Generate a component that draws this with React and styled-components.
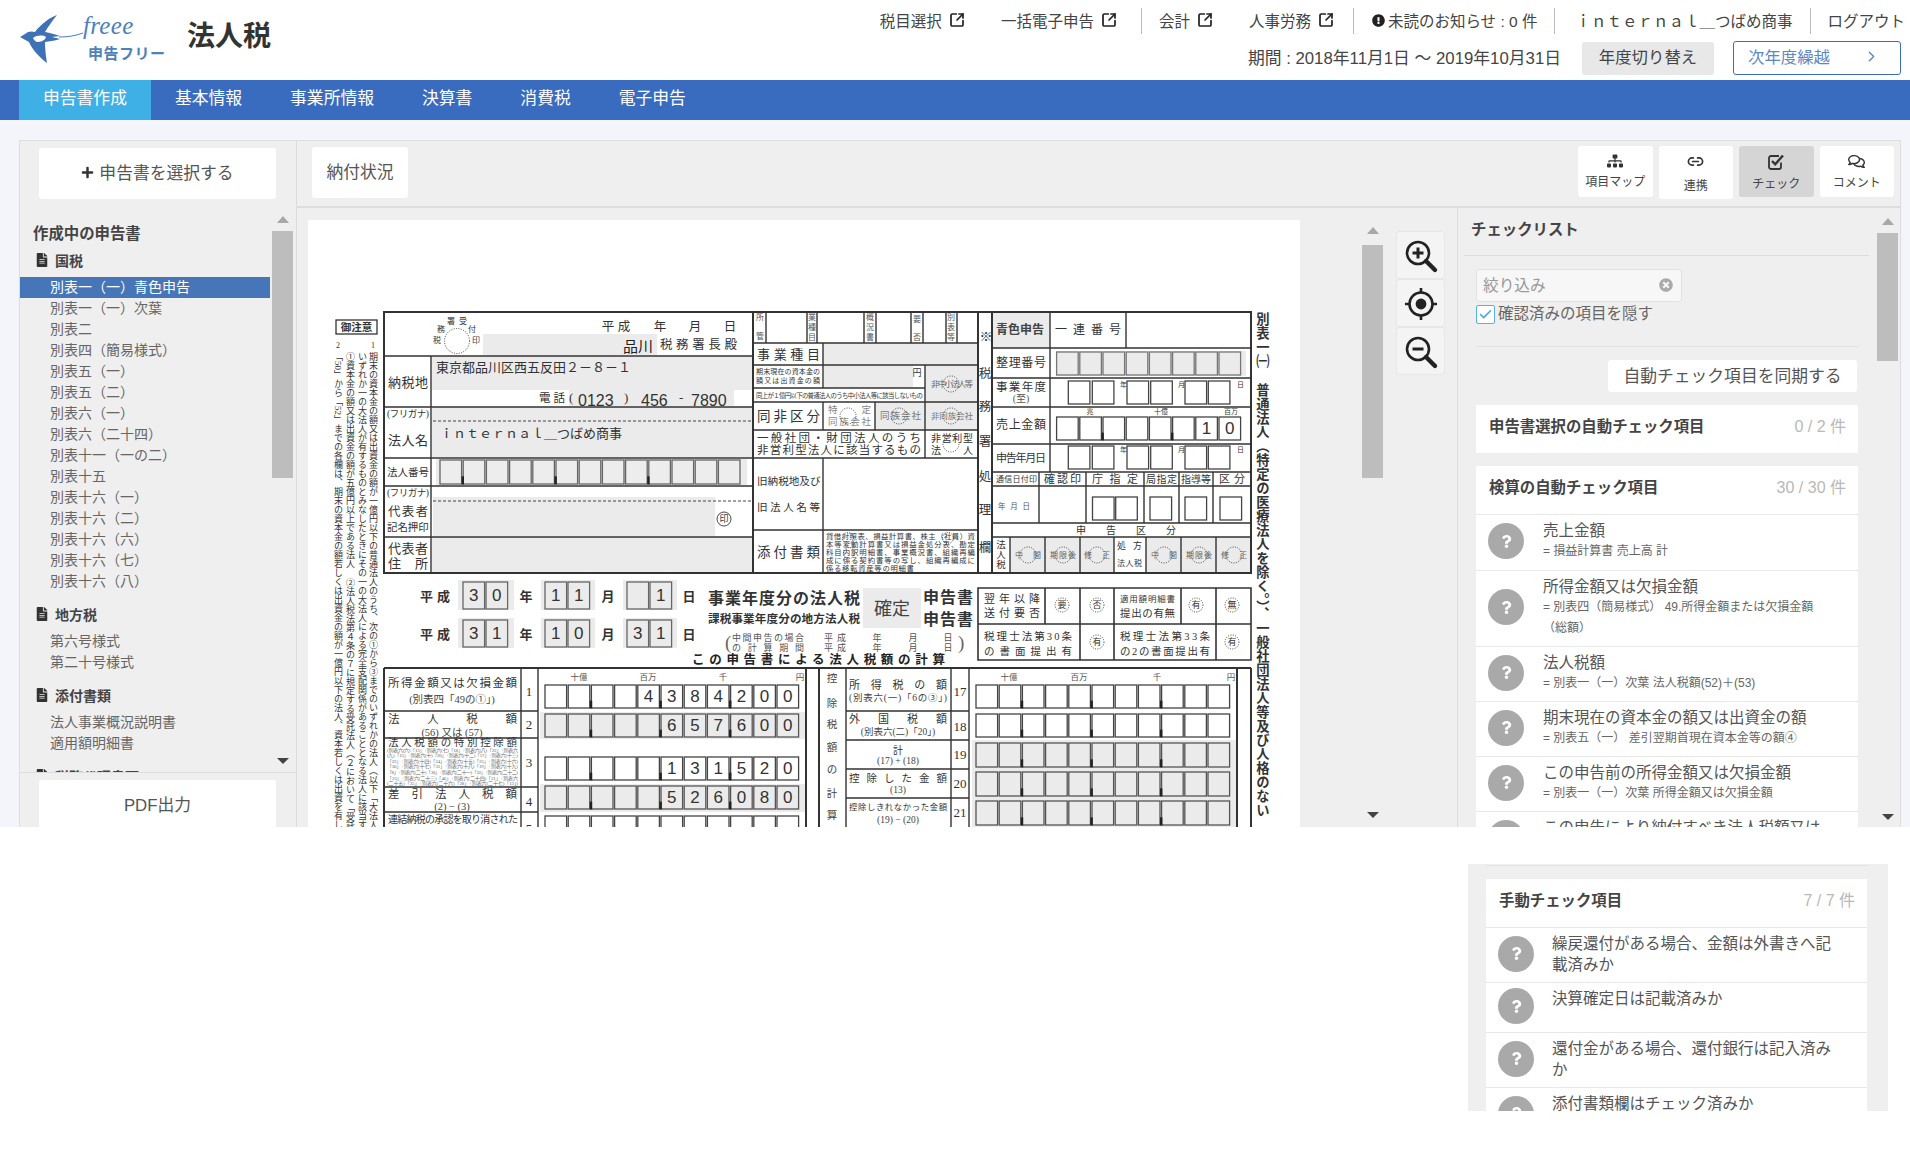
import React from "react";
import styled, { createGlobalStyle } from "styled-components";
import { SquareArrowOutUpRight, Link2, ChevronRight, Check } from "lucide-react";
import { FaExclamationCircle, FaPlus, FaFileAlt, FaSitemap, FaRegComments, FaTimesCircle, FaQuestion } from "react-icons/fa";

const SANS = `"Liberation Sans","Noto Sans CJK JP",sans-serif`;
const Global = createGlobalStyle`
  html, body { margin: 0; padding: 0; background: #fff; }
  body { font-family: ${SANS}; color: #333; }
  * { box-sizing: border-box; }
`;

const Page = styled.div`width: 1910px; height: 1172px; overflow: hidden; background: #fff;`;
const AppFrame = styled.div`height: 827px; overflow: hidden; background: #f3f5fa;`;

const Header = styled.header`height: 80px; background: #fff; display: flex; justify-content: space-between; padding: 0 5px 0 19px;`;
const Brand = styled.div`display: flex; align-items: flex-start;`;
const LogoSvg = styled.svg`margin-top: 14px; flex: none;`;
const ProductTitle = styled.h1`margin: 19px 0 0 18px; font-size: 28px; line-height: 36px; font-weight: 700; color: #333;`;
const HeaderRight = styled.div`display: flex; flex-direction: column; align-items: flex-end;`;
const TopLinks = styled.div`display: flex; height: 26px; margin-top: 8px;`;
const LinkGroup = styled.div`
  display: flex; align-items: center; gap: ${(p) => p.$gap || 36}px;
  padding: 0 ${(p) => p.$pr ?? 18}px 2px ${(p) => p.$pl ?? 17}px;
  border-left: ${(p) => (p.$first ? "none" : "1px solid #bbb")};
  font-size: 15.5px; color: #444; white-space: nowrap;
`;
const ExtLink = styled.span`display: inline-flex; align-items: center; gap: 7px; svg { color: #222; }`;
const NoticeText = styled.span`display: inline-flex; align-items: center; gap: 3px; svg { color: #222; }`;
const PeriodRow = styled.div`display: flex; align-items: center; margin: 7px 0 0; height: 34px; padding-right: 4px;`;
const PeriodText = styled.span`font-size: 16.8px; color: #444; margin: 0 21px 2px 0; white-space: nowrap;`;
const SwitchButton = styled.button`
  width: 132px; height: 33px; border: 0; border-radius: 3px; background: #e8e8e8; color: #444;
  font: 16.4px ${SANS}; padding: 0 0 4px; margin-right: 19px;
`;
const NextButton = styled.button`
  width: 168px; height: 34px; border: 1px solid #396cbf; border-radius: 3px; background: #fff; color: #5b87c9;
  font: 16.4px ${SANS}; display: flex; align-items: center; justify-content: space-between; padding: 0 20px 4px 14px;
`;

const NavBar = styled.nav`height: 40px; background: #396cbf; display: flex; padding-left: 19px;`;
const NavTab = styled.div`
  padding: 0 24px; line-height: 38px; font-size: 16.8px; color: #fff; white-space: nowrap;
  background: ${(p) => (p.$active ? "#3fb0e6" : "transparent")};
`;

const Workspace = styled.main`
  margin: 20px 9px 0 19px; height: 720px; background: #efefef; border: 1px solid #ddd; border-bottom: 0;
  display: flex;
`;
const Sidebar = styled.aside`width: 277px; flex: none; border-right: 1px solid #ddd; display: flex; flex-direction: column;`;
const SideTop = styled.div`height: 67px; flex: none; padding: 7px 20px 0 19px;`;
const WhiteButton = styled.div`
  background: #fff; border-radius: 3px; display: flex; align-items: center; justify-content: center; gap: 5px;
  font-size: 16.8px; color: #555; height: ${(p) => p.$h || 51}px; width: ${(p) => p.$w || "auto"};
  white-space: nowrap; flex: none; padding-bottom: 3px;
`;
const SideBody = styled.div`height: 565px; flex: none; display: flex; overflow: hidden; border-bottom: 1px solid #ddd;`;
const Tree = styled.div`width: 250px; flex: none; padding-top: 15px;`;
const TreeTitle = styled.div`padding-left: 13px; font-size: 15.4px; line-height: 22px; font-weight: 700; color: #444;`;
const TreeSection = styled.div`
  display: flex; align-items: center; gap: 6px; padding-left: 15px; height: 20px; font-size: 14px; font-weight: 700; color: #444;
  margin: ${(p) => p.$mt ?? 12}px 0 7px; svg { color: #333; }
`;
const TreeRow = styled.div`
  height: 21px; line-height: 21px; padding-left: 30px; font-size: 14px; white-space: nowrap;
  color: ${(p) => (p.$active ? "#fff" : "#666")}; background: ${(p) => (p.$active ? "#4676b8" : "transparent")};
`;
const SideFoot = styled.div`flex: 1; padding: 7px 20px 0 19px;`;

const Rail = styled.div`
  width: 21px; flex: none; display: flex; flex-direction: column; align-items: center;
  margin-left: ${(p) => p.$ml || 0}px; height: ${(p) => p.$h}px; padding-top: ${(p) => p.$pt}px;
`;
const ArrowUp = styled.i`width: 0; height: 0; border: 6px solid transparent; border-top: 0; border-bottom: 7px solid #a8a8a8; display: block; flex: none;`;
const ArrowDown = styled.i`width: 0; height: 0; border: 6px solid transparent; border-bottom: 0; border-top: 6px solid #444; display: block; margin-top: auto; flex: none;`;
const Thumb = styled.div`width: 21px; flex: none; background: #bdbdbd; height: ${(p) => p.$h}px; margin-top: ${(p) => p.$mt}px;`;

const Center = styled.div`flex: 1; min-width: 0; display: flex; flex-direction: column;`;
const Toolbar = styled.div`height: 67px; flex: none; border-bottom: 2px solid #ddd; display: flex; align-items: flex-start; padding: 6px 6px 0 15px;`;
const ToolGroup = styled.div`margin-left: auto; display: flex; gap: 6px; margin-top: -1px;`;
const ToolButton = styled.div`
  width: 74.5px; height: ${(p) => (p.$tall ? 53 : 51)}px; border-radius: 3px; background: ${(p) => (p.$on ? "#d5d5d5" : "#fff")};
  display: flex; flex-direction: column; align-items: center; padding-top: 7px; font-size: 12px; color: #444;
  svg { color: #333; flex: none; }
`;
const ToolLabel = styled.span`margin-top: ${(p) => (p.$tall ? 8 : 5)}px; line-height: 16px; white-space: nowrap;`;
const WorkRow = styled.div`flex: 1; min-height: 0; display: flex;`;
const FormArea = styled.section`width: 1160px; flex: none; display: flex; padding: 12px 0 0 11px;`;
const Paper = styled.div`width: 992px; height: 620px; flex: none; background: #fff; overflow: hidden;`;
const ZoomTools = styled.div`width: 49px; flex: none; margin: 11px 0 0 13px; display: flex; flex-direction: column;`;
const ZoomButton = styled.div`
  height: 48px; background: #f4f4f4; border: 1px solid #e7e7e7; border-radius: 3px;
  display: flex; align-items: center; justify-content: center; padding-top: 1px;
`;
const CheckPanel = styled.section`flex: 1; min-width: 0; border-left: 1px solid #ddd; display: flex;`;
const CheckMain = styled.div`width: 419px; flex: none;`;
const CheckHead = styled.div`
  height: 48px; margin: 0 8px 0 6px; padding: 11px 0 0 7px; border-bottom: 1px solid #ddd;
  font-size: 15.4px; line-height: 22px; font-weight: 700; color: #444;
`;
const Filter = styled.div`padding: 13px 19px 0 18px;`;
const SearchBox = styled.div`
  width: 206px; height: 33px; border: 1px solid #e2e2e2; border-radius: 3px; background: #f7f7f7; color: #999;
  display: flex; align-items: center; justify-content: space-between; padding: 0 8px 2px 6px; font-size: 15.7px;
  svg { color: #aaa; }
`;
const HideRow = styled.div`display: flex; align-items: center; gap: 3px; margin-top: 2px; font-size: 15.5px; color: #666; line-height: 20px;`;
const CheckBox = styled.span`
  width: 19px; height: 19px; background: #fff; border: 1px solid #56b1ea; border-radius: 2px;
  display: flex; align-items: center; justify-content: center; color: #47a8e6;
`;
const Rule = styled.div`height: 1px; background: #e2e2e2; margin-top: 22px;`;
const SyncRow = styled.div`display: flex; justify-content: flex-end; margin: 13px 1px 0 0;`;
const Card = styled.div`background: #fff; margin-top: 13px;`;
const CardHead = styled.div`
  height: ${(p) => p.$h || 48}px; display: flex; justify-content: space-between; padding: 11px 12px 0 13px; line-height: 22px;
`;
const CardTitle = styled.span`font-size: 15.4px; font-weight: 700; color: #444;`;
const CardCount = styled.span`font-size: 16px; color: #b8b8b8;`;
const CheckRow = styled.div`
  display: flex; align-items: center; border-top: 1px solid #e8e8e8; padding-left: 12px;
  min-height: ${(p) => p.$h || 0}px;
`;
const QuestionDot = styled.span`
  width: 36px; height: 36px; border-radius: 50%; background: #a9a9a9; color: #fff; flex: none; margin-bottom: 3px;
  display: flex; align-items: center; justify-content: center;
`;
const RowText = styled.div`
  align-self: flex-start; margin: 5px 0 0 ${(p) => p.$ml || 19}px; width: ${(p) => p.$w || 290}px;
`;
const RowTitle = styled.div`font-size: 15.5px; line-height: 21px; color: #555;`;
const RowSub = styled.div`font-size: 12px; line-height: 21px; color: #666;`;

const BottomStrip = styled.div`
  width: 420px; height: 247px; margin: 37px 0 0 1468px; background: #efefef; overflow: hidden; padding: 1px 21px 0 18px;
`;
const StripRule = styled.div`height: 1px; background: #e4e4e4;`;

/* ---------- form picture helpers ---------- */
const Sheet = styled.svg`
  display: block; font-family: "Liberation Serif","Noto Sans CJK JP",serif; fill: #333;
`;
const Tx = ({ x, y, s = 12, len, mid, w, c, fam, children }) => (
  <text
    x={x} y={y} fontSize={s} dominantBaseline="central" textLength={len} lengthAdjust={len ? "spacing" : undefined}
    textAnchor={mid ? "middle" : "start"} fontWeight={w} fill={c} fontFamily={fam}
  >{children}</text>
);
const Vt = ({ x, y, s = 9, ls, w, children }) => (
  <text x={x} y={y} fontSize={s} writingMode="vertical-rl" letterSpacing={ls} fontWeight={w}>{children}</text>
);
const Box = ({ x, y, w, h, f = "#ebebeb" }) => <rect x={x} y={y} width={w} height={h} fill={f} />;
const Lines = ({ d, sw = 1.4 }) => <path d={d} fill="none" stroke="#333" strokeWidth={sw} />;
const Seal = ({ x, y, r = 8, t, c = "#666", s = 8.5, len }) => (
  <g>
    <circle cx={x} cy={y} r={r} fill="none" stroke="#333" strokeWidth="0.9" strokeDasharray="1 1.4" />
    {t && <Tx x={x} y={y} s={s} mid c={c} len={len}>{t}</Tx>}
  </g>
);
const Strip = ({ x, y, n, pitch = 23.2, w = 21.6, h = 23, digits = "", fill = "#fff", ticks = [], stroke = "#444", size = 17 }) => {
  const start = n - digits.length;
  return (
    <g>
      {Array.from({ length: n }).map((_, i) => (
        <rect key={i} x={x + i * pitch} y={y} width={w} height={h} fill={fill} stroke={stroke} strokeWidth="1.3" />
      ))}
      {digits.split("").map((d, i) => (
        <Tx key={i} x={x + (start + i) * pitch + w / 2} y={y + h / 2} s={size} mid fam='"Liberation Sans"' c="#333">{d}</Tx>
      ))}
      {ticks.map((t) => <rect key={t} x={x + t * pitch - 1.6} y={y + h * 0.68} width="2.4" height={h * 0.34} fill="#222" />)}
    </g>
  );
};
const DateBoxes = ({ y }) => (
  <g>
    <Strip x={1068.3} y={y} n={2} pitch={24} />
    <Strip x={1127} y={y} n={2} pitch={23.7} />
    <Strip x={1185} y={y} n={2} pitch={23.3} />
    <Tx x={1120} y={y + 4} s={7}>年</Tx><Tx x={1178} y={y + 4} s={7}>月</Tx><Tx x={1237} y={y + 4} s={7}>日</Tx>
  </g>
);
const smallLaw = [
  "(別表六(六)「13」+別表六(七)「18」+別表六(八)「22」+別表六",
  "(九)「13」+別表六(十)「26」+別表六(十二)「17」+別表六(十三)",
  "「22」+別表六(十四)「24」+別表六(十五)「25」+別表六(十六)",
  "「36」+別表六(十七)「31」+別表六(十八)「19」+別表六(十九)",
  "「8」+別表六(二十)「30」+別表六(二十一)「32」+別表六(二十二)",
  "「23」+別表六(二十三)「46」+別表六(二十四)「21」+別表六",
  "(二十五)「35」+別表六(二十六)「28」+別表六(二十七)「13」)",
];
const attachLines = [
  "貸借対照表、損益計算書、株主（社員）資", "本等変動計算書又は損益金処分表、勘定", "科目内訳明細書、事業概況書、組織再編",
  "成に係る契約書等の写し、組織再編成に", "係る移転資産等の明細書",
];

const FormSheet = () => (
  <Sheet width="992" height="607" viewBox="308 220 992 607">
    {/* margin notes */}
    <rect x="336" y="320" width="41" height="14" fill="none" stroke="#222" strokeWidth="1.2" />
    <Tx x={356.5} y={327} s={10.5} mid w="700">御注意</Tx>
    <Tx x={373} y={345} s={8} mid>1</Tx><Tx x={338} y={345} s={8} mid>2</Tx>
    <Vt x={373} y={352}>期末の資本金の額又は出資金の額が一億円以下の普通法人のうち、次の①から③までのいずれかの法人（以下「大法人」</Vt>
    <Vt x={362} y={352}>いずれか一の大法人が有するものとみなしたときにその一の大法人による完全支配関係があることとなる法人に該当する場合</Vt>
    <Vt x={350} y={352}>①資本金の額又は出資金の額が五億円以上である法人</Vt>
    <Vt x={350} y={578}>②法人税法第４条の７に規定する受託法人（２において「受託法</Vt>
    <Vt x={338} y={352}>「50」から「52」までの各欄は、期末の資本金の額若しくは出資金の額が一億円以下の法人、資本若しくは出資を有しな</Vt>

    {/* fills, top block */}
    <Box x={483} y={334} w={174} h={21} />
    <Box x={432} y={356} w={321} h={34} />
    <Box x={569} y={390} w={165} h={16} />
    <Box x={432} y={407} w={321} h={50} />
    <Box x={436} y={459} w={311} h={26} />
    <Box x={433} y={497} w={282} h={39} />
    <Box x={432} y={537} w={321} h={36} />
    <Box x={823} y={343} w={155} h={22} />
    <Box x={824} y={365} w={89} h={23} />
    <Box x={925} y={365} w={53} h={37} />
    <Box x={875} y={402} w={103} h={28} />
    <Box x={992} y={312} w={58} h={36} />
    <Box x={1010} y={537} w={104} h={36} />
    <Box x={1146} y={537} w={105} h={36} />
    <Box x={863} y={588} w={58} h={40} />

    {/* left block */}
    <Lines sw={2} d="M384 312H1251V573H384Z" />
    <Lines d="M384 356H753M384 407H753M384 458H753M384 486H753M384 537H753M431 356V573" />
    <Lines sw={2} d="M753 312V573M978 312V573M992 312V573" />
    <path d="M433 421H753M433 501H753" fill="none" stroke="#444" strokeWidth="1" strokeDasharray="3 2" />
    <Seal x={457} y={341} r={12.5} />
    {[["税", 437, 340], ["務", 441, 329], ["署", 451, 321], ["受", 463, 321], ["付", 472, 329], ["印", 476, 340]].map(([t, x, y]) => (
      <Tx key={t} x={x} y={y} s={8} mid>{t}</Tx>
    ))}
    {[["平", 608], ["成", 624], ["年", 660], ["月", 695], ["日", 730]].map(([t, x]) => <Tx key={t} x={x} y={327} s={12.5} mid>{t}</Tx>)}
    <Tx x={623} y={347} s={15} c="#222">品川</Tx>
    <Tx x={660} y={345} s={12.5} len={77}>税務署長殿</Tx>
    <Tx x={388} y={382} s={13} len={40}>納税地</Tx>
    <Tx x={436} y={367} s={13}>東京都品川区西五反田２－８－１</Tx>
    <Tx x={539} y={398} s={11.5} len={26}>電話</Tx>
    <Tx x={569} y={397} s={13}>(</Tx>
    <Tx x={578} y={400} s={16} fam='"Liberation Sans"'>0123</Tx>
    <Tx x={624} y={397} s={13}>)</Tx>
    <Tx x={641} y={400} s={16} fam='"Liberation Sans"'>456</Tx>
    <Tx x={679} y={397} s={13}>-</Tx>
    <Tx x={691} y={400} s={16} fam='"Liberation Sans"'>7890</Tx>
    <Tx x={387} y={414} s={9.5} len={42}>(フリガナ)</Tx>
    <Tx x={388} y={440} s={13} len={40}>法人名</Tx>
    <Tx x={440} y={433} s={13}>ｉｎｔｅｒｎａｌ＿つばめ商事</Tx>
    <Tx x={387} y={472} s={10.5} len={42}>法人番号</Tx>
    <Strip x={440} y={460} n={13} h={24} stroke="#666" fill="#ededed" ticks={[1, 5, 9]} />
    <Tx x={387} y={493} s={9.5} len={42}>(フリガナ)</Tx>
    <Tx x={388} y={512} s={12.5} len={40}>代表者</Tx>
    <Tx x={387} y={527} s={10.4}>記名押印</Tx>
    <circle cx="724" cy="519" r="7" fill="none" stroke="#333" strokeWidth="0.9" />
    <Tx x={724} y={519} s={9} mid>印</Tx>
    <Tx x={388} y={548} s={13} len={40}>代表者</Tx>
    <Tx x={388} y={563} s={13} len={40}>住 所</Tx>

    {/* middle block */}
    <Lines d="M754 343H978M754 365H978M754 388H925M754 402H978M754 430H978M754 458H978M754 530H978" />
    <Lines d="M766 312V343M807 312V343M817 312V343M864 312V343M876 312V343M911 312V343M923 312V343M946 312V343M957 312V343" />
    <Lines d="M823 343V388M925 365V458M823 402V430M875 402V430M823 458V573" />
    {[["所", 760, 317], ["管", 760, 336], ["業", 812, 317], ["種", 812, 327], ["目", 812, 337], ["概", 870, 317], ["況", 870, 327], ["書", 870, 337], ["要", 917, 319], ["否", 917, 337], ["別", 951, 317], ["表", 951, 327], ["等", 951, 337]].map(([t, x, y], i) => (
      <Tx key={i} x={x} y={y} s={8} mid c="#555">{t}</Tx>
    ))}
    <Tx x={757} y={354} s={13} len={63}>事業種目</Tx>
    <Tx x={756} y={372} s={7} len={64}>期末現在の資本金の</Tx>
    <Tx x={756} y={381} s={7} len={64}>額又は出資金の額</Tx>
    <Tx x={917} y={373} s={9} mid>円</Tx>
    <Tx x={756} y={395} s={6.4} len={167}>同上が１億円以下の普通法人のうち中小法人等に該当しないもの</Tx>
    <Tx x={931} y={384} s={8.5} len={42} c="#666">非中小法人等</Tx>
    <Seal x={951} y={384} />
    <Tx x={757} y={416} s={13.5} len={63}>同非区分</Tx>
    <Tx x={828} y={410} s={9.5} len={43} c="#888">特　　定</Tx>
    <Tx x={828} y={422} s={9.5} len={43} c="#888">同族会社</Tx>
    <Seal x={848} y={416} />
    <Tx x={880} y={416} s={9.5} len={41} c="#777">同族会社</Tx>
    <Seal x={899} y={416} />
    <Tx x={931} y={416} s={8.5} len={42} c="#777">非同族会社</Tx>
    <Seal x={951} y={416} />
    <Tx x={757} y={438} s={11.5} len={164}>一般社団・財団法人のうち</Tx>
    <Tx x={757} y={450} s={11.5} len={164}>非営利型法人に該当するもの</Tx>
    <Tx x={931} y={438} s={10} len={42}>非営利型</Tx>
    <Tx x={931} y={450} s={10} len={42}>法　　人</Tx>
    <Seal x={951} y={444} />
    <Tx x={757} y={481} s={10.6}>旧納税地及び</Tx>
    <Tx x={757} y={507} s={10.6} len={63}>旧法人名等</Tx>
    <Tx x={757} y={552} s={13.5} len={63}>添付書類</Tx>
    {attachLines.map((t, i) => <Tx key={i} x={826} y={536 + i * 8.2} s={7.4} len={i === 4 ? 88 : 149}>{t}</Tx>)}
    <Seal x={848} y={538} r={5.5} /><Seal x={849} y={553} r={5.5} /><Seal x={948} y={538} r={5.5} />
    <Vt x={985} y={330} s={13}>※</Vt>
    {[["税", 374], ["務", 407], ["署", 442], ["処", 477], ["理", 510], ["欄", 548]].map(([t, y]) => <Tx key={t} x={985} y={y} s={12.5} mid>{t}</Tx>)}

    {/* right block */}
    <Lines d="M992 348H1251M992 378H1251M992 407H1251M992 444H1251M992 472H1251M992 486H1251M992 523H1251M992 537H1251" />
    <Lines d="M1050 312V472M1126 312V348M1039 472V523M1086 472V523M1144 472V523M1179 472V523M1213 472V523" />
    <Lines d="M1010 537V573M1045 537V573M1080 537V573M1114 537V573M1146 537V573M1181 537V573M1216 537V573" />
    <Tx x={996} y={330} s={12} w="700" c="#444">青色申告</Tx>
    <Tx x={1055} y={330} s={12} len={66}>一連番号</Tx>
    <Tx x={996} y={363} s={12} len={50}>整理番号</Tx>
    <Box x={1056} y={351} w={190} h={25} />
    <Strip x={1056.6} y={352} n={8} stroke="#777" fill="#ebebeb" />
    <Tx x={996} y={387} s={11.5} len={50}>事業年度</Tx>
    <Tx x={1021} y={398} s={10} mid c="#555">(至)</Tx>
    <DateBoxes y={381} />
    <Tx x={996} y={425} s={12} len={50}>売上金額</Tx>
    <Tx x={1090} y={412} s={7} mid>兆</Tx><Tx x={1161} y={412} s={7} mid>十億</Tx><Tx x={1231} y={412} s={7} mid>百万</Tx>
    <Strip x={1056.6} y={417} n={8} digits="10" ticks={[2, 5]} />
    <Tx x={996} y={458} s={11} len={50}>申告年月日</Tx>
    <DateBoxes y={446} />
    <Tx x={996} y={479} s={8} len={41}>通信日付印</Tx>
    <Tx x={1044} y={479} s={11} len={37}>確認印</Tx>
    <Tx x={1092} y={479} s={11} len={46}>庁指定</Tx>
    <Tx x={1146} y={479} s={10} len={31}>局指定</Tx>
    <Tx x={1181} y={479} s={10} len={30}>指導等</Tx>
    <Tx x={1219} y={479} s={11} len={26}>区分</Tx>
    <Tx x={998} y={506} s={7.5} len={32} c="#555">年月日</Tx>
    <Strip x={1092.5} y={497} n={2} />
    <Strip x={1150} y={497} n={1} />
    <Strip x={1185} y={497} n={1} />
    <Strip x={1220} y={497} n={1} />
    <Tx x={1076} y={530} s={10} len={100}>申告区分</Tx>
    {[["法", 545], ["人", 555], ["税", 565]].map(([t, y]) => <Tx key={t} x={1001} y={y} s={9.5} mid>{t}</Tx>)}
    <Tx x={1117} y={546} s={9} len={25}>処 方</Tx>
    <Tx x={1117} y={563} s={8} len={25}>法人税</Tx>
    {[[1028, "中間"], [1063, "期限後"], [1097, "修正"], [1164, "中間"], [1199, "期限後"], [1234, "修正"]].map(([x, t], i) => (
      <g key={i}><Tx x={x} y={555} s={8} mid len={26} c="#666">{t}</Tx><Seal x={x} y={555} /></g>
    ))}
    <Vt x={1262} y={312} s={13.3} ls={0.7} w="700">別表一㈠</Vt>
    <Vt x={1262} y={383} s={13.3} ls={0.7} w="700">普通法人（特定の医療法人を除く。）、一般社団法人等及び人格のない</Vt>

    {/* period lines */}
    <Box x={458} y={580} w={56} h={30} /><Box x={458} y={618} w={56} h={30} />
    <Box x={541} y={580} w={54} h={30} /><Box x={541} y={618} w={54} h={30} />
    <Box x={623} y={580} w={54} h={30} /><Box x={623} y={618} w={54} h={30} />
    {[596, 634].map((y) => (
      <g key={y}>
        <Tx x={420} y={y} s={13} len={30} w="700">平成</Tx>
        <Tx x={526} y={y} s={13} mid w="700">年</Tx>
        <Tx x={608} y={y} s={13} mid w="700">月</Tx>
        <Tx x={689} y={y} s={13} mid w="700">日</Tx>
      </g>
    ))}
    <Strip x={463} y={582} n={2} pitch={23} h={27} digits="30" fill="#ebebeb" stroke="#666" />
    <Strip x={545} y={582} n={2} pitch={23} h={27} digits="11" fill="#ebebeb" stroke="#666" />
    <Strip x={627} y={582} n={2} pitch={23} h={27} digits="1" fill="#ebebeb" stroke="#666" />
    <Strip x={463} y={620} n={2} pitch={23} h={27} digits="31" fill="#ebebeb" stroke="#666" />
    <Strip x={545} y={620} n={2} pitch={23} h={27} digits="10" fill="#ebebeb" stroke="#666" />
    <Strip x={627} y={620} n={2} pitch={23} h={27} digits="31" fill="#ebebeb" stroke="#666" />
    <Tx x={708} y={598} s={16} len={152} w="700">事業年度分の法人税</Tx>
    <Tx x={708} y={619} s={11.6} len={152} w="700">課税事業年度分の地方法人税</Tx>
    <Tx x={892} y={609} s={18} mid c="#444">確定</Tx>
    <Tx x={923} y={597} s={16} len={50} w="700">申告書</Tx>
    <Tx x={923} y={619} s={16} len={50} w="700">申告書</Tx>
    <Tx x={725} y={642} s={19} c="#666">(</Tx>
    <Tx x={732} y={638} s={9} c="#555" len={72}>中間申告の場合</Tx>
    <Tx x={732} y={648} s={9} c="#555" len={72}>の計算期間</Tx>
    {[638, 648].map((y) => (
      <g key={y}>
        <Tx x={824} y={y} s={9} c="#555" len={22}>平成</Tx>
        <Tx x={877} y={y} s={9} mid c="#555">年</Tx><Tx x={913} y={y} s={9} mid c="#555">月</Tx><Tx x={948} y={y} s={9} mid c="#555">日</Tx>
      </g>
    ))}
    <Tx x={958} y={642} s={19} c="#666">)</Tx>
    <Tx x={692} y={660} s={12.5} len={253} w="700" c="#222">この申告書による法人税額の計算</Tx>

    {/* small options table */}
    <Lines sw={1.6} d="M978 588H1251V660H978ZM978 624H1251M1045 588V624M1080 588V660M1114 588V660M1181 588V624M1216 588V660" />
    <Tx x={984} y={599} s={11} len={56}>翌年以降</Tx>
    <Tx x={984} y={613} s={11} len={56}>送付要否</Tx>
    <Tx x={1120} y={599} s={8.5} len={55}>適用額明細書</Tx>
    <Tx x={1120} y={613} s={10.5} len={55}>提出の有無</Tx>
    <Tx x={984} y={636} s={10.5} len={88}>税理士法第30条</Tx>
    <Tx x={984} y={651} s={10.5} len={88}>の書面提出有</Tx>
    <Tx x={1120} y={636} s={10.5} len={90}>税理士法第33条</Tx>
    <Tx x={1120} y={651} s={10.5} len={90}>の2の書面提出有</Tx>
    {[[1062, 605, "要"], [1097, 605, "否"], [1196, 605, "有"], [1232, 605, "無"], [1097, 642, "有"], [1232, 642, "有"]].map(([x, y, t], i) => (
      <Seal key={i} x={x} y={y} r={7} t={t} c="#333" s={9} />
    ))}

    {/* calculation tables */}
    <Box x={540} y={712} w={266} h={27} />
    <Box x={540} y={784} w={266} h={28} />
    <Box x={972} y={740} w={265} h={87} />
    <Lines sw={2} d="M384 668H1251M384 668V830M806 668V830M819 668V830M1237 668V830M1251 668V830" />
    <Lines d="M521 668V830M538 668V830M384 711H538M384 738H538M384 787H538M384 812H538" />
    <Lines d="M846 668V830M951 668V830M969 668V830M846 711H969M846 740H969M846 769H969M846 798H969" />
    <Tx x={388} y={683} s={11.5} len={129}>所得金額又は欠損金額</Tx>
    <Tx x={452} y={699} s={10.5} mid c="#444">(別表四「49の①」)</Tx>
    <Tx x={388} y={719} s={11.5} len={129}>法　　人　　税　　額</Tx>
    <Tx x={452} y={732} s={10.5} mid c="#444">(56) 又は (57)</Tx>
    <Tx x={388} y={742} s={10.5} len={129}>法人税額の特別控除額</Tx>
    {smallLaw.map((t, i) => <Tx key={i} x={387} y={750 + i * 5.6} s={5} len={131} c="#666">{t}</Tx>)}
    <Tx x={388} y={794} s={11.5} len={129}>差引法人税額</Tx>
    <Tx x={452} y={806} s={10.5} mid c="#444">(2) − (3)</Tx>
    <Tx x={388} y={819} s={10} len={130}>連結納税の承認を取り消された</Tx>
    {[["1", 691], ["2", 724], ["3", 762], ["4", 801], ["5", 828]].map(([t, y]) => <Tx key={t} x={529} y={y} s={13} mid>{t}</Tx>)}
    {[["十億", 579], ["百万", 648], ["千", 723], ["円", 800], ["十億", 1009], ["百万", 1079], ["千", 1157], ["円", 1231]].map(([t, x], i) => (
      <Tx key={i} x={x} y={677} s={8.5} mid c="#555">{t}</Tx>
    ))}
    <Strip x={545} y={685} n={11} digits="4384200" ticks={[2, 5, 8]} />
    <Strip x={545} y={714} n={11} digits="657600" fill="#ebebeb" ticks={[2, 5, 8]} stroke="#555" />
    <Strip x={545} y={757} n={11} digits="131520" ticks={[2, 5, 8]} />
    <Strip x={545} y={786} n={11} digits="526080" fill="#ebebeb" ticks={[2, 5, 8]} stroke="#555" />
    <Strip x={545} y={816} n={11} ticks={[2, 5, 8]} />
    {[["控", 678], ["除", 703], ["税", 724], ["額", 747], ["の", 769], ["計", 793], ["算", 815]].map(([t, y]) => <Tx key={t} x={832} y={y} s={10.5} mid c="#444">{t}</Tx>)}
    <Tx x={849} y={685} s={11} len={98}>所得税の額</Tx>
    <Tx x={849} y={698} s={9.5} len={98} c="#444">(別表六(一)「6の③」)</Tx>
    <Tx x={849} y={719} s={11} len={98}>外　国　税　額</Tx>
    <Tx x={898} y={732} s={9.5} mid c="#444">(別表六(二)「20」)</Tx>
    <Tx x={898} y={750} s={10} mid>計</Tx>
    <Tx x={898} y={761} s={9.5} mid c="#444">(17) + (18)</Tx>
    <Tx x={849} y={778} s={10.5} len={98}>控除した金額</Tx>
    <Tx x={898} y={790} s={9.5} mid c="#444">(13)</Tx>
    <Tx x={849} y={807} s={8.4} len={98}>控除しきれなかった金額</Tx>
    <Tx x={898} y={820} s={9.5} mid c="#444">(19) − (20)</Tx>
    {[["17", 691], ["18", 726], ["19", 754], ["20", 783], ["21", 812]].map(([t, y]) => <Tx key={t} x={960} y={y} s={13} mid>{t}</Tx>)}
    <Strip x={976} y={685} n={11} ticks={[2, 5, 8]} />
    <Strip x={976} y={714} n={11} ticks={[2, 5, 8]} />
    <Strip x={976} y={743} n={11} fill="#ebebeb" ticks={[2, 5, 8]} stroke="#555" h={24} />
    <Strip x={976} y={772} n={11} fill="#ebebeb" ticks={[2, 5, 8]} stroke="#555" h={24} />
    <Strip x={976} y={801} n={11} fill="#ebebeb" ticks={[2, 5, 8]} stroke="#555" h={24} />
  </Sheet>
);

/* ---------- small icons ---------- */
const Logo = () => (
  <LogoSvg width="150" height="50" viewBox="0 0 150 50">
    <path fill="#3f72b4" d="M1 23 L6 20 C9 17 13 17 16 18 C22 10 30 4 38 1 C33 7 29 13 26 18 C31 19 36 20 41 22 L33 23 L41 25 C35 27 30 27 26 28 C26 36 27 43 28 49 C20 43 13 35 10 28 C7 26 4 25 1 23Z" />
    <path fill="#fff" d="M14 24 C18 21 24 21 27 23 C26 27 21 28 18 28 C16 27 15 26 14 24Z" />
    <path fill="none" stroke="#4b7fbd" strokeWidth="1" d="M40 23 C48 23 56 22 64 19" />
    <text x="64" y="20" fontFamily='"Liberation Serif",serif' fontStyle="italic" fontSize="25" fill="#4b7fbd" letterSpacing="0.3">freee</text>
    <text x="69" y="38" dominantBaseline="central" fontFamily='"Noto Sans CJK JP",sans-serif' fontWeight="700" fontSize="15" textLength="77" fill="#4d82b8">申告フリー</text>
  </LogoSvg>
);
const ZoomGlass = ({ minus, plus }) => (
  <svg width="36" height="36" viewBox="0 0 36 36" fill="none" stroke="#222">
    <circle cx="15" cy="15" r="11" strokeWidth="2.6" />
    <path d="M23 23 L32 32" strokeWidth="4.4" strokeLinecap="round" />
    {minus && <path d="M9.5 15H20.5" strokeWidth="3" />}
    {plus && <path d="M9.5 15H20.5M15 9.5V20.5" strokeWidth="3" />}
  </svg>
);
const Target = () => (
  <svg width="34" height="36" viewBox="0 0 34 36" fill="none" stroke="#222">
    <circle cx="17" cy="18" r="11.5" strokeWidth="2.6" />
    <circle cx="17" cy="18" r="5.4" fill="#222" stroke="none" />
    <path d="M17 2V7M17 29V34M1 18H6M28 18H33" strokeWidth="2.6" />
  </svg>
);
const CheckSquareIcon = () => (
  <svg width="18" height="18" viewBox="0 0 18 18" fill="none" stroke="currentColor" strokeWidth="1.8">
    <path d="M14 9.5V14a2 2 0 0 1-2 2H4a2 2 0 0 1-2-2V5a2 2 0 0 1 2-2h8" />
    <path d="M5 8l3.2 3.2L16 2.5" strokeWidth="2.4" />
  </svg>
);

const treeTax = ["別表一（一）青色申告", "別表一（一）次葉", "別表二", "別表四（簡易様式）", "別表五（一）", "別表五（二）", "別表六（一）", "別表六（二十四）", "別表十一（一の二）", "別表十五", "別表十六（一）", "別表十六（二）", "別表十六（六）", "別表十六（七）", "別表十六（八）"];
const autoRows = [
  { t: "売上金額", s: "= 損益計算書 売上高 計", h: 56 },
  { t: "所得金額又は欠損金額", s: "= 別表四（簡易様式） 49.所得金額または欠損金額（総額）", h: 76 },
  { t: "法人税額", s: "= 別表一（一）次葉 法人税額(52)＋(53)", h: 55 },
  { t: "期末現在の資本金の額又は出資金の額", s: "= 別表五（一） 差引翌期首現在資本金等の額④", h: 55 },
  { t: "この申告前の所得金額又は欠損金額", s: "= 別表一（一）次葉 所得金額又は欠損金額", h: 55 },
  { t: "この申告により納付すべき法人税額又は", s: "", h: 55 },
];
const manualRows = [
  { t: "繰戻還付がある場合、金額は外書きへ記載済みか", h: 55 },
  { t: "決算確定日は記載済みか", h: 50 },
  { t: "還付金がある場合、還付銀行は記入済みか", h: 55 },
  { t: "添付書類欄はチェック済みか", h: 55 },
];

export default function App() {
  return (
    <Page>
      <Global />
      <AppFrame>
        <Header>
          <Brand>
            <Logo />
            <ProductTitle>法人税</ProductTitle>
          </Brand>
          <HeaderRight>
            <TopLinks>
              <LinkGroup $first $pr={24}>
                <ExtLink>税目選択<SquareArrowOutUpRight size={16} strokeWidth={2.6} /></ExtLink>
                <ExtLink>一括電子申告<SquareArrowOutUpRight size={16} strokeWidth={2.6} /></ExtLink>
              </LinkGroup>
              <LinkGroup $pr={19}>
                <ExtLink>会計<SquareArrowOutUpRight size={16} strokeWidth={2.6} /></ExtLink>
                <ExtLink>人事労務<SquareArrowOutUpRight size={16} strokeWidth={2.6} /></ExtLink>
              </LinkGroup>
              <LinkGroup $pl={18} $pr={17}>
                <NoticeText><FaExclamationCircle size={13} />未読のお知らせ : 0 件</NoticeText>
              </LinkGroup>
              <LinkGroup $pl={20} $pr={18}>ｉｎｔｅｒｎａｌ＿つばめ商事</LinkGroup>
              <LinkGroup $pl={16} $pr={0}>ログアウト</LinkGroup>
            </TopLinks>
            <PeriodRow>
              <PeriodText>期間 : 2018年11月1日 ～ 2019年10月31日</PeriodText>
              <SwitchButton>年度切り替え</SwitchButton>
              <NextButton>次年度繰越<ChevronRight size={17} /></NextButton>
            </PeriodRow>
          </HeaderRight>
        </Header>
        <NavBar>
          <NavTab $active>申告書作成</NavTab>
          <NavTab>基本情報</NavTab>
          <NavTab>事業所情報</NavTab>
          <NavTab>決算書</NavTab>
          <NavTab>消費税</NavTab>
          <NavTab>電子申告</NavTab>
        </NavBar>
        <Workspace>
          <Sidebar>
            <SideTop>
              <WhiteButton><FaPlus size={13} color="#333" />申告書を選択する</WhiteButton>
            </SideTop>
            <SideBody>
              <Tree>
                <TreeTitle>作成中の申告書</TreeTitle>
                <TreeSection $mt={5}><FaFileAlt size={14} />国税</TreeSection>
                {treeTax.map((t, i) => <TreeRow key={t} $active={i === 0}>{t}</TreeRow>)}
                <TreeSection><FaFileAlt size={14} />地方税</TreeSection>
                <TreeRow>第六号様式</TreeRow>
                <TreeRow>第二十号様式</TreeRow>
                <TreeSection><FaFileAlt size={14} />添付書類</TreeSection>
                <TreeRow>法人事業概況説明書</TreeRow>
                <TreeRow>適用額明細書</TreeRow>
                <TreeSection><FaFileAlt size={14} />税務代理書面</TreeSection>
              </Tree>
              <Rail $ml={2} $h={556} $pt={8}>
                <ArrowUp />
                <Thumb $mt={8} $h={247} />
                <ArrowDown />
              </Rail>
            </SideBody>
            <SideFoot>
              <WhiteButton $h={50}>PDF出力</WhiteButton>
            </SideFoot>
          </Sidebar>
          <Center>
            <Toolbar>
              <WhiteButton $w="96px">納付状況</WhiteButton>
              <ToolGroup>
                <ToolButton><FaSitemap size={16} /><ToolLabel>項目マップ</ToolLabel></ToolButton>
                <ToolButton $tall><Link2 size={17} strokeWidth={2.4} /><ToolLabel $tall>連携</ToolLabel></ToolButton>
                <ToolButton $on><CheckSquareIcon /><ToolLabel>チェック</ToolLabel></ToolButton>
                <ToolButton><FaRegComments size={17} /><ToolLabel>コメント</ToolLabel></ToolButton>
              </ToolGroup>
            </Toolbar>
            <WorkRow>
              <FormArea>
                <Paper><FormSheet /></Paper>
                <Rail $ml={62} $h={598} $pt={7}>
                  <ArrowUp />
                  <Thumb $mt={11} $h={233} />
                  <ArrowDown />
                </Rail>
                <ZoomTools>
                  <ZoomButton><ZoomGlass plus /></ZoomButton>
                  <ZoomButton><Target /></ZoomButton>
                  <ZoomButton><ZoomGlass minus /></ZoomButton>
                </ZoomTools>
              </FormArea>
              <CheckPanel>
                <CheckMain>
                  <CheckHead>チェックリスト</CheckHead>
                  <Filter>
                    <SearchBox>絞り込み<FaTimesCircle size={14} /></SearchBox>
                    <HideRow>
                      <CheckBox><Check size={15} strokeWidth={2.6} /></CheckBox>
                      確認済みの項目を隠す
                    </HideRow>
                    <Rule />
                    <SyncRow><WhiteButton $w="249px" $h={32}>自動チェック項目を同期する</WhiteButton></SyncRow>
                    <Card>
                      <CardHead $h={48}><CardTitle>申告書選択の自動チェック項目</CardTitle><CardCount>0 / 2 件</CardCount></CardHead>
                    </Card>
                    <Card>
                      <CardHead><CardTitle>検算の自動チェック項目</CardTitle><CardCount>30 / 30 件</CardCount></CardHead>
                      {autoRows.map((r) => (
                        <CheckRow key={r.t} $h={r.h}>
                          <QuestionDot><FaQuestion size={13} /></QuestionDot>
                          <RowText>
                            <RowTitle>{r.t}</RowTitle>
                            {r.s && <RowSub>{r.s}</RowSub>}
                          </RowText>
                        </CheckRow>
                      ))}
                    </Card>
                  </Filter>
                </CheckMain>
                <Rail $h={612} $pt={10}>
                  <ArrowUp />
                  <Thumb $mt={8} $h={128} />
                  <ArrowDown />
                </Rail>
              </CheckPanel>
            </WorkRow>
          </Center>
        </Workspace>
      </AppFrame>
      <BottomStrip>
        <StripRule />
        <Card>
          <CardHead><CardTitle>手動チェック項目</CardTitle><CardCount>7 / 7 件</CardCount></CardHead>
          {manualRows.map((r) => (
            <CheckRow key={r.t} $h={r.h}>
              <QuestionDot><FaQuestion size={13} /></QuestionDot>
              <RowText $ml={18}><RowTitle>{r.t}</RowTitle></RowText>
            </CheckRow>
          ))}
        </Card>
      </BottomStrip>
    </Page>
  );
}
